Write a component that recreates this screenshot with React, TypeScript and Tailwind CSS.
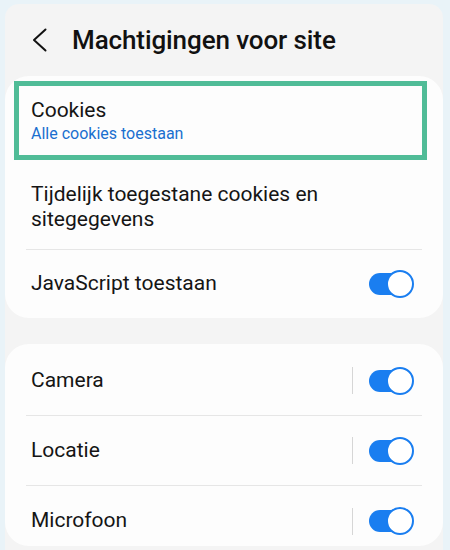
function Toggle() {
  return (
    <div className="relative w-[45px] h-[28px] flex items-center shrink-0">
      <div className="w-[44px] h-[22px] rounded-full bg-[#1a7ef0]" />
      <div className="absolute right-0 top-0 w-[28px] h-[28px] rounded-full bg-white border-2 border-[#1a7ef0]" />
    </div>
  );
}

function SwitchRow({ label, last }: { label: string; last?: boolean }) {
  return (
    <div
      className={`flex items-center h-[70px] pl-[5px] pr-[8px] ${
        last ? "" : "border-b border-[#e6e6e6]"
      }`}
    >
      <span className="flex-1 text-[21px] text-[#151515]">{label}</span>
      <div className="w-px h-[27px] bg-[#d6d6d6] mr-[16px]" />
      <Toggle />
    </div>
  );
}

export default function App() {
  return (
    <div
      className="w-[450px] h-[550px] bg-[#e9f3f8] pl-[5px] pr-[7px] pt-[4px] overflow-hidden"
      style={{ fontFamily: "Roboto, 'Noto Sans', sans-serif" }}
    >
      <div className="h-full bg-[#f4f4f4] rounded-t-[14px] flex flex-col">
        <div className="h-[72px] flex items-center">
          <svg
            width="16"
            height="24"
            viewBox="0 0 16 24"
            className="ml-[27px] text-[#111]"
            fill="none"
            stroke="currentColor"
            strokeWidth="2"
            strokeLinecap="round"
            strokeLinejoin="round"
          >
            <polyline points="13.5,1.5 2,12 13.5,22.5" />
          </svg>
          <h1 className="ml-[24px] text-[26px] font-medium text-[#111] tracking-[-0.1px]">
            Machtigingen voor site
          </h1>
        </div>

        <div className="bg-[#fdfdfd] rounded-[24px] pt-[5px]">
          <div className="ml-[9px] mr-[16px] border-[5px] border-[#50bc97] h-[79px] pl-[12px] flex flex-col justify-center">
            <span className="text-[21px] text-[#151515] leading-[26px]">Cookies</span>
            <span className="text-[16px] text-[#1a6fcf] leading-[22px]">Alle cookies toestaan</span>
          </div>
          <div className="mx-[21px]">
            <div className="pl-[5px] pt-[22px] pb-[17px] border-b border-[#e6e6e6] text-[21px] leading-[25px] text-[#151515]">
              Tijdelijk toegestane cookies en
              <br />
              sitegegevens
            </div>
            <div className="flex items-center h-[68px] pl-[5px] pr-[8px]">
              <span className="flex-1 text-[21px] text-[#151515]">JavaScript toestaan</span>
              <Toggle />
            </div>
          </div>
        </div>

        <div className="bg-[#fdfdfd] rounded-[24px] mt-[26px] pt-[2px] h-[202px] overflow-hidden">
          <div className="mx-[21px]">
            <SwitchRow label="Camera" />
            <SwitchRow label="Locatie" />
            <SwitchRow label="Microfoon" last />
          </div>
        </div>
      </div>
    </div>
  );
}
